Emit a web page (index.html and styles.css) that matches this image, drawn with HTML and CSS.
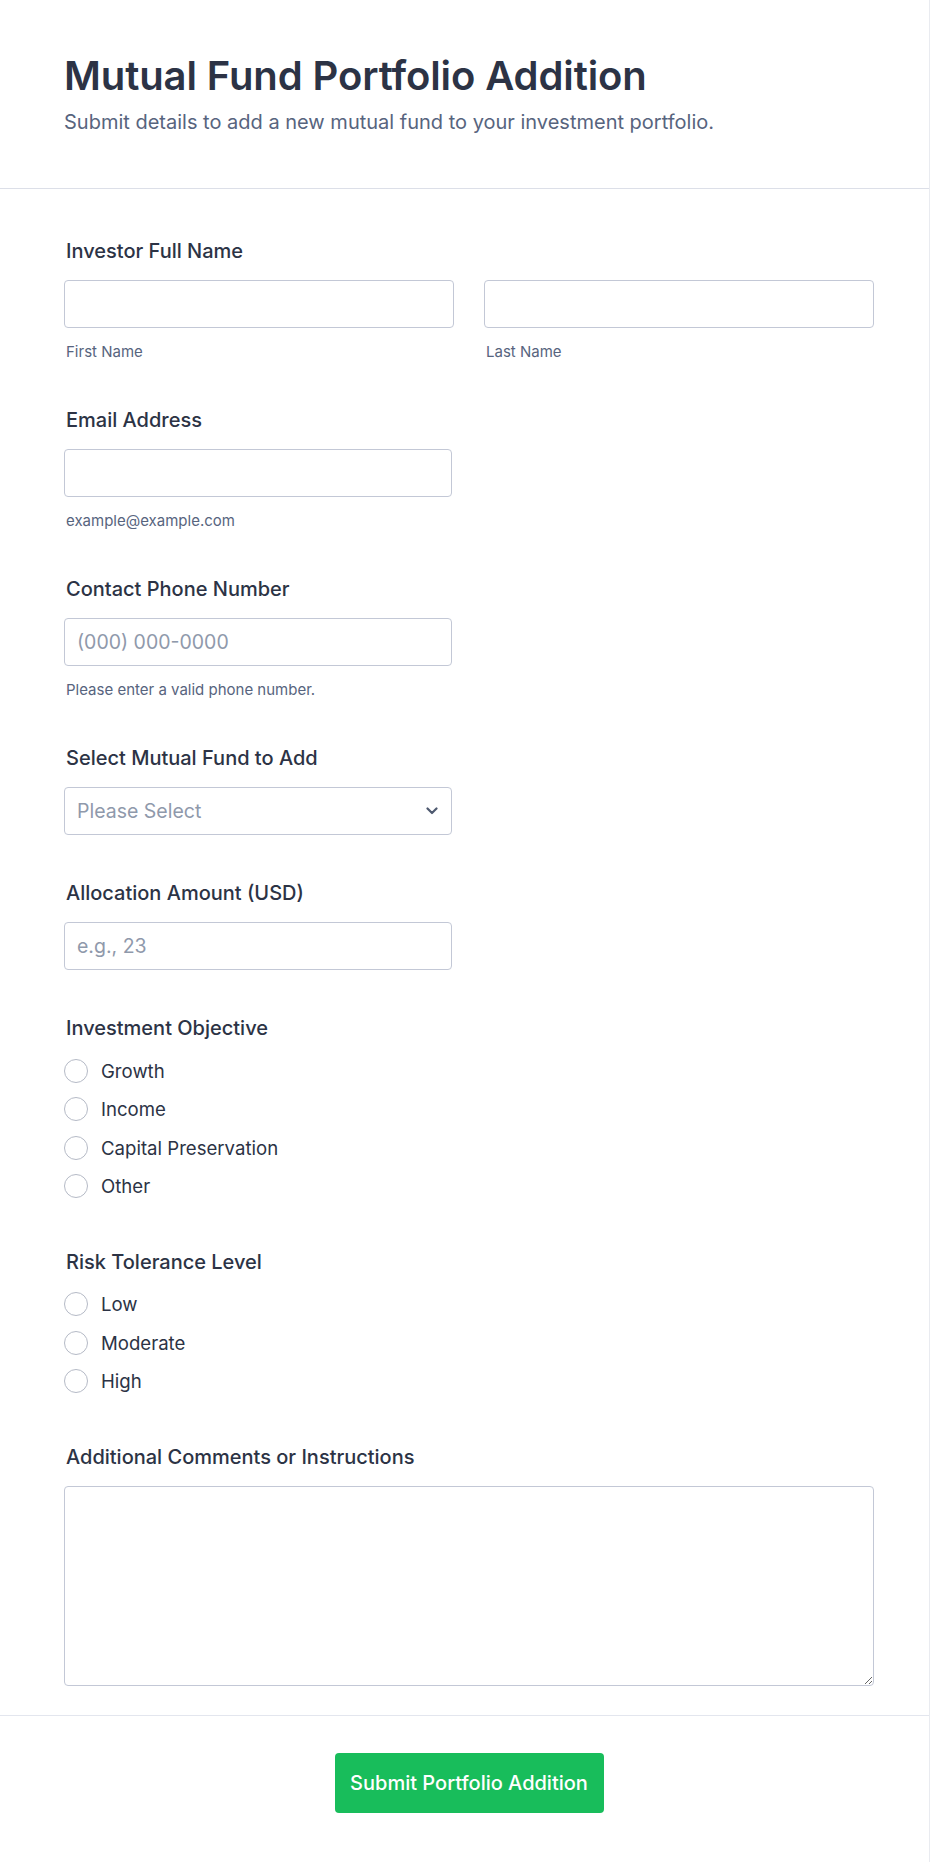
FILE: index.html
```html
<!DOCTYPE html>
<html lang="en">
<head>
<meta charset="utf-8">
<title>Mutual Fund Portfolio Addition</title>
<link rel="stylesheet" href="styles.css">
</head>
<body>
<div class="page">
  <header class="head">
    <h1 class="title">Mutual Fund Portfolio Addition</h1>
    <p class="subtitle">Submit details to add a new mutual fund to your investment portfolio.</p>
  </header>

  <form class="form">
    <div class="field">
      <label class="label">Investor Full Name</label>
      <div class="name-row">
        <div class="col">
          <input class="input" type="text">
          <span class="sublabel">First Name</span>
        </div>
        <div class="col">
          <input class="input" type="text">
          <span class="sublabel">Last Name</span>
        </div>
      </div>
    </div>

    <div class="field">
      <label class="label">Email Address</label>
      <input class="input input-half" type="email">
      <span class="sublabel">example@example.com</span>
    </div>

    <div class="field">
      <label class="label">Contact Phone Number</label>
      <input class="input input-half" type="tel" placeholder="(000) 000-0000">
      <span class="sublabel">Please enter a valid phone number.</span>
    </div>

    <div class="field">
      <label class="label">Select Mutual Fund to Add</label>
      <div class="select-wrap">
        <select class="input select">
          <option>Please Select</option>
        </select>
        <svg class="chevron" width="12" height="8" viewBox="0 0 12 8" aria-hidden="true"><path d="M1.5 1.5 L6 6 L10.5 1.5" fill="none" stroke="#4f5a70" stroke-width="2.2" stroke-linecap="round" stroke-linejoin="round"/></svg>
      </div>
    </div>

    <div class="field">
      <label class="label">Allocation Amount (USD)</label>
      <input class="input input-half" type="text" placeholder="e.g., 23">
    </div>

    <div class="field field-radio">
      <label class="label label-radio">Investment Objective</label>
      <div class="options">
        <label class="option"><span class="radio"></span><span class="option-text">Growth</span></label>
        <label class="option"><span class="radio"></span><span class="option-text">Income</span></label>
        <label class="option"><span class="radio"></span><span class="option-text">Capital Preservation</span></label>
        <label class="option"><span class="radio"></span><span class="option-text">Other</span></label>
      </div>
    </div>

    <div class="field field-radio">
      <label class="label label-radio">Risk Tolerance Level</label>
      <div class="options">
        <label class="option"><span class="radio"></span><span class="option-text">Low</span></label>
        <label class="option"><span class="radio"></span><span class="option-text">Moderate</span></label>
        <label class="option"><span class="radio"></span><span class="option-text">High</span></label>
      </div>
    </div>

    <div class="field field-last">
      <label class="label label-area">Additional Comments or Instructions</label>
      <textarea class="input textarea"></textarea>
    </div>
  </form>

  <footer class="foot">
    <button class="submit" type="button">Submit Portfolio Addition</button>
  </footer>
</div>
</body>
</html>
```

FILE: styles.css
```css
* { box-sizing: border-box; }

html, body {
  margin: 0;
  padding: 0;
  background: #ffffff;
}

body {
  font-family: Inter, "Noto Sans", "Liberation Sans", sans-serif;
  color: #2c3345;
}

.page {
  width: 930px;
  min-height: 1862px;
  border-right: 1px solid #e9ebf0;
  background: #ffffff;
}

.head {
  padding: 52px 55px 54.3px 64px;
  border-bottom: 1px solid #dcdfe8;
}

.title {
  margin: 0;
  font-size: 40px;
  line-height: 48px;
  font-weight: 600;
  color: #2c3345;
  letter-spacing: -0.1px;
}

.subtitle {
  margin: 9.7px 0 0;
  font-size: 20px;
  line-height: 24px;
  font-weight: 400;
  color: #57647e;
}

.form {
  padding: 50px 55px 29px 64px;
}

.field {
  display: flex;
  flex-direction: column;
  align-items: flex-start;
  margin-bottom: 46.4px;
}

.field-radio { margin-bottom: 44.2px; }
.field-last { margin-bottom: 0; }

.label {
  display: block;
  padding-left: 2px;
  margin-bottom: 17px;
  font-size: 20px;
  line-height: 24px;
  font-weight: 500;
  color: #2c3345;
}

.label-radio { margin-bottom: 11.3px; }
.label-area { margin-bottom: 17px; }

.name-row {
  display: grid;
  grid-template-columns: 1fr 1fr;
  column-gap: 30px;
  width: 100%;
}

.col {
  display: flex;
  flex-direction: column;
}

.input {
  display: block;
  width: 100%;
  height: 48px;
  margin: 0;
  padding: 0 12px;
  border: 1px solid #c3c8d6;
  border-radius: 4px;
  background: #ffffff;
  font-family: Inter, "Noto Sans", "Liberation Sans", sans-serif;
  font-size: 19.5px;
  color: #2c3345;
  outline: none;
}

.input::placeholder { color: #8f99ab; opacity: 1; }

.input-half { width: 388px; }

.sublabel {
  display: block;
  margin-top: 15.5px;
  padding-left: 2px;
  font-size: 15px;
  line-height: 18px;
  color: #57647e;
}

.select-wrap {
  position: relative;
  width: 388px;
}

.select {
  appearance: none;
  -webkit-appearance: none;
  color: #8f99ab;
  padding-right: 40px;
}

.chevron {
  position: absolute;
  right: 14px;
  top: 20px;
  pointer-events: none;
}

.options {
  display: flex;
  flex-direction: column;
}

.option {
  display: flex;
  align-items: center;
  height: 38.5px;
  gap: 13px;
  cursor: pointer;
}

.radio {
  flex: none;
  width: 24px;
  height: 24px;
  border: 1px solid #b5bac6;
  border-radius: 50%;
  background: #ffffff;
}

.option-text {
  font-size: 18.6px;
  line-height: 24px;
  color: #2c3345;
}

.textarea {
  height: 200px;
  padding: 12px;
  resize: vertical;
}

.foot {
  border-top: 1px solid #e3e6ee;
  padding: 37px 55px 49px 64px;
  display: flex;
  justify-content: center;
}

.submit {
  width: 269px;
  height: 60px;
  border: none;
  border-radius: 4px;
  background: #18bd5b;
  color: #ffffff;
  font-family: Inter, "Noto Sans", "Liberation Sans", sans-serif;
  font-size: 20px;
  font-weight: 500;
  cursor: pointer;
}
```
